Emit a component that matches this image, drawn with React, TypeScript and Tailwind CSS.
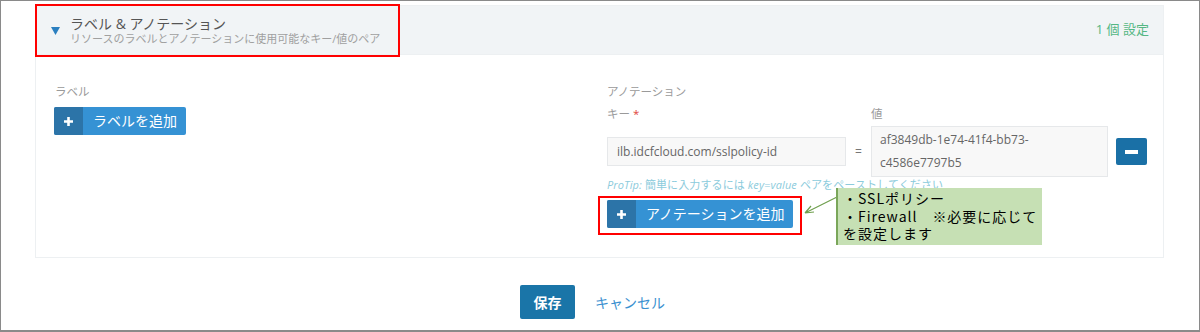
import React from 'react';

const jp = "font-['Open_Sans','Noto_Sans_CJK_JP',sans-serif]";

function SplitButton({ label }: { label: string }) {
  return (
    <button className="flex h-[28px] items-stretch rounded-[2px] overflow-hidden bg-[#3592d4] text-white">
      <span className="flex w-[29px] items-center justify-center bg-[#2c74a8]">
        <svg width="11" height="11" viewBox="0 0 11 11">
          <path d="M5.5 1v9M1 5.5h9" stroke="#fff" strokeWidth="2.6" />
        </svg>
      </span>
      <span className="flex items-center pl-[10px] pr-[9px] text-[14px] leading-none">{label}</span>
    </button>
  );
}

export default function App() {
  return (
    <div className={`relative w-[1200px] h-[332px] overflow-hidden border border-b-2 border-[#8a8a8a] bg-white ${jp}`}>
      <div className="pl-[34px] pt-[4px]">
        <section className="w-[1129px] border border-[#edf0f2]">
          <header className="relative flex h-[48px] items-center bg-[#f1f4f6] pl-[15px] pr-[14px]">
            <svg width="9" height="8" viewBox="0 0 9 8" className="mt-[2px]">
              <path d="M0 0h9L4.5 8z" fill="#2b7fc0" />
            </svg>
            <div className="ml-[10px] flex flex-col">
              <span className="text-[14px] leading-[17px] text-[#555]">ラベル &amp; アノテーション</span>
              <span className="text-[11px] leading-[14px] text-[#a0a0a0]">リソースのラベルとアノテーションに使用可能なキー/値のペア</span>
            </div>
            <span className="ml-auto text-[13px] text-[#55b784]">1 個 設定</span>
            <div className="absolute left-[-1px] top-[-2px] h-[53px] w-[365px] border-2 border-[#f00]" />
          </header>

          <div className="flex border-t border-[#edf0f2] pl-[19px] pt-[29px] pb-[22px]">
            <div className="w-[552px]">
              <div className="text-[11.5px] leading-[16px] text-[#9a9a9a]">ラベル</div>
              <div className="mt-[7px] -ml-[1px] flex">
                <SplitButton label="ラベルを追加" />
              </div>
            </div>

            <div className="flex flex-col">
              <div className="text-[11.5px] leading-[16px] text-[#9a9a9a]">アノテーション</div>
              <div className="mt-[6px] flex text-[11.5px] leading-[16px] text-[#9a9a9a]">
                <span className="w-[264px]">キー <span className="text-[#e0443a]">*</span></span>
                <span>値</span>
              </div>
              <div className="mt-[4px] flex items-center">
                <div className="flex h-[29px] w-[239px] items-center border border-[#e6e8ea] bg-[#f8f8f8] pl-[9px] text-[12px] text-[#666]">
                  ilb.idcfcloud.com/sslpolicy-id
                </div>
                <span className="w-[25px] text-center text-[12px] text-[#777]">=</span>
                <div className="h-[51px] w-[237px] border border-[#e6e8ea] bg-[#f8f8f8] pl-[8px] pt-[1px] text-[12px] leading-[23px] text-[#666]">
                  af3849db-1e74-41f4-bb73-
                  <br />
                  c4586e7797b5
                </div>
                <button className="ml-[8px] flex h-[27px] w-[31px] items-center justify-center rounded-[2px] bg-[#1a70a6]">
                  <span className="h-[4px] w-[13px] bg-white" />
                </button>
              </div>
              <div className="mt-[1px] text-[11px] leading-[14px] tracking-[0.01em] text-[#8ccbdc]">
                <i>ProTip:</i> 簡単に入力するには <i>key=value</i> ペアをペーストしてください
              </div>
              <div className="mt-[4px] -ml-[9px] flex w-fit border-2 border-[#f00] px-[7px] pt-[2px] pb-[5px]">
                <SplitButton label="アノテーションを追加" />
              </div>
            </div>
          </div>
        </section>

        <div className="mt-[27px] flex items-center pl-[485px]">
          <button className="h-[34px] w-[55px] rounded-[2px] bg-[#1a75a8] text-[14px] font-semibold text-white">保存</button>
          <span className="ml-[20px] text-[14px] text-[#3a90d0]">キャンセル</span>
        </div>
      </div>

      <svg className="absolute left-[800px] top-[190px]" width="40" height="30" viewBox="0 0 40 30">
        <path d="M36 6L4 22M4 22l9-1M4 22l6-7" stroke="#6f9f4e" strokeWidth="1.2" fill="none" />
      </svg>
      <div className="absolute left-[835px] top-[187px] flex h-[57px] w-[206px] border-l-2 border-[#7aa65a]">
        <div className="flex-1 bg-[#c6e0b4] pl-[5px] pt-[2px] font-['Noto_Sans_CJK_JP',sans-serif] text-[14px] leading-[17.5px] tracking-[0.07em] text-black">
          <div>・SSLポリシー</div>
          <div>・Firewall　※必要に応じて</div>
          <div>を設定します</div>
        </div>
      </div>
    </div>
  );
}
